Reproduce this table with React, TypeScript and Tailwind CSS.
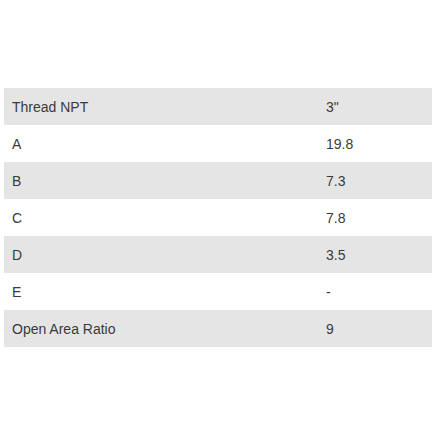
import React from 'react';

const rows = [
  { label: 'Thread NPT', value: '3"' },
  { label: 'A', value: '19.8' },
  { label: 'B', value: '7.3' },
  { label: 'C', value: '7.8' },
  { label: 'D', value: '3.5' },
  { label: 'E', value: '-' },
  { label: 'Open Area Ratio', value: '9' },
];

export default function App() {
  return (
    <div className="w-[437px] h-[437px] bg-white pt-[88px] px-[4px]" style={{ fontFamily: '"Liberation Sans", Arial, sans-serif' }}>
      <div className="w-[428px]">
        {rows.map((row, i) => (
          <div key={row.label} className={`flex h-[37px] items-center pt-[2px] text-[14px] text-[#3a3a3a] ${i % 2 === 0 ? 'bg-[#e5e5e5]' : 'bg-white'}`}>
            <div className="w-[322px] pl-[8px]">{row.label}</div>
            <div>{row.value}</div>
          </div>
        ))}
      </div>
    </div>
  );
}
